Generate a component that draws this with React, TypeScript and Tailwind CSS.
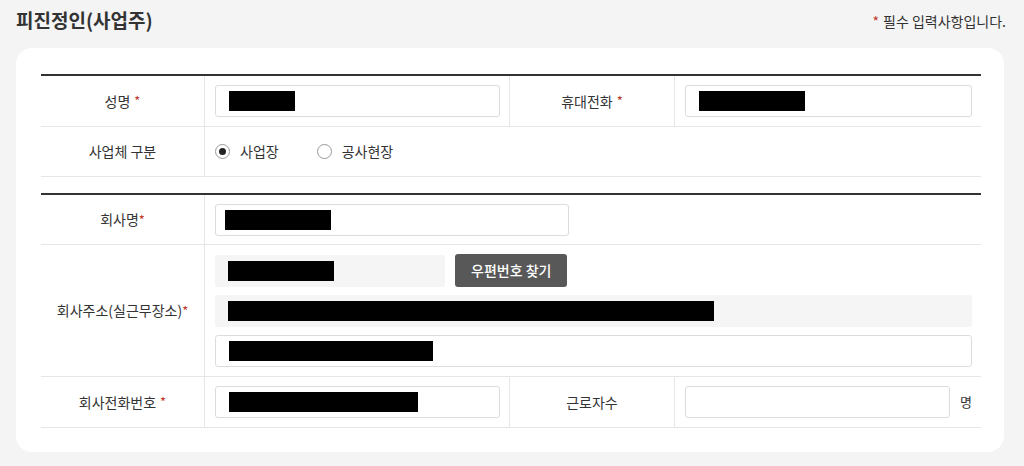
import type { ReactNode } from "react";

const font = { fontFamily: '"Noto Sans CJK KR", "Noto Sans", sans-serif' };

function Req() {
  return <span className="ml-1 text-[13px] text-[#c0392b]">*</span>;
}

function Redacted({ w }: { w: number }) {
  return <span className="block h-[20px] bg-black" style={{ width: w }} />;
}

function Field({ w, children, gray }: { w?: string; children?: ReactNode; gray?: boolean }) {
  return (
    <div
      className={`flex h-[32px] items-center rounded-[3px] px-[13px] ${
        gray ? "bg-[#f5f5f5]" : "border border-[#dcdcdc] bg-white"
      } ${w ?? "w-full"}`}
    >
      {children}
    </div>
  );
}

function Label({ children }: { children: ReactNode }) {
  return (
    <div className="flex items-center justify-center border-r border-[#e6e6e6] text-[14px] text-[#333]">
      {children}
    </div>
  );
}

function Radio({ checked, label }: { checked?: boolean; label: string }) {
  return (
    <label className="flex items-center gap-[10px] text-[14px] text-[#333]">
      <span className="flex h-[15px] w-[15px] items-center justify-center rounded-full border border-[#9a9a9a] bg-white">
        {checked && <span className="h-[7px] w-[7px] rounded-full bg-[#222]" />}
      </span>
      {label}
    </label>
  );
}

export default function App() {
  return (
    <div className="min-h-screen w-[1024px] bg-[#f4f4f4] px-4 pt-[6px] pb-[14px]" style={font}>
      {/* Header */}
      <div className="flex items-end justify-between pr-[2px]">
        <h2 className="text-[19px] font-bold leading-[27px] text-[#333]">피진정인(사업주)</h2>
        <p className="mb-[1px] text-[14px] text-[#333]">
          <span className="mr-1 text-[#c0392b]">*</span>필수 입력사항입니다.
        </p>
      </div>

      {/* Card */}
      <div className="mt-[15px] w-[988px] rounded-[16px] bg-white pt-[26px] pb-[24px] pl-[25px] pr-[23px]">
        {/* Section 1 */}
        <div className="border-t-2 border-[#333]">
          <div className="grid h-[51px] grid-cols-[164px_305px_165px_1fr] border-b border-[#e6e6e6]">
            <Label>
              성명<Req />
            </Label>
            <div className="flex items-center border-r border-[#e6e6e6] pl-[10px] pr-[9px]">
              <Field>
                <Redacted w={66} />
              </Field>
            </div>
            <Label>
              휴대전화<Req />
            </Label>
            <div className="flex items-center pl-[10px] pr-[9px]">
              <Field>
                <Redacted w={106} />
              </Field>
            </div>
          </div>
          <div className="grid h-[50px] grid-cols-[164px_1fr] border-b border-[#e6e6e6]">
            <Label>사업체 구분</Label>
            <div className="flex items-center gap-[38px] pl-[10px]">
              <Radio checked label="사업장" />
              <Radio label="공사현장" />
            </div>
          </div>
        </div>

        {/* Section 2 */}
        <div className="mt-[16px] border-t-2 border-[#333]">
          <div className="grid h-[50px] grid-cols-[164px_1fr] border-b border-[#e6e6e6]">
            <Label>
              회사명<span className="text-[13px] text-[#c0392b]">*</span>
            </Label>
            <div className="flex items-center pl-[10px]">
              <Field w="w-[354px]">
                <span className="-ml-[4px]">
                  <Redacted w={106} />
                </span>
              </Field>
            </div>
          </div>
          <div className="grid grid-cols-[164px_1fr] border-b border-[#e6e6e6]">
            <Label>
              회사주소(실근무장소)<span className="text-[13px] text-[#c0392b]">*</span>
            </Label>
            <div className="flex flex-col gap-[8px] pt-[9px] pb-[9px] pl-[10px] pr-[9px]">
              <div className="flex items-center gap-[10px]">
                <Field gray w="w-[230px]">
                  <Redacted w={106} />
                </Field>
                <button className="h-[33px] rounded-[3px] bg-[#585858] px-[16px] text-[14px] font-medium text-white">
                  우편번호 찾기
                </button>
              </div>
              <Field gray>
                <Redacted w={486} />
              </Field>
              <Field>
                <Redacted w={204} />
              </Field>
            </div>
          </div>
          <div className="grid h-[51px] grid-cols-[164px_305px_165px_1fr] border-b border-[#e6e6e6]">
            <Label>
              회사전화번호<Req />
            </Label>
            <div className="flex items-center border-r border-[#e6e6e6] pl-[10px] pr-[9px]">
              <Field>
                <Redacted w={189} />
              </Field>
            </div>
            <Label>근로자수</Label>
            <div className="flex items-center gap-[10px] pl-[10px] pr-[9px]">
              <Field />
              <span className="shrink-0 text-[13px] text-[#333]">명</span>
            </div>
          </div>
        </div>
      </div>
    </div>
  );
}
